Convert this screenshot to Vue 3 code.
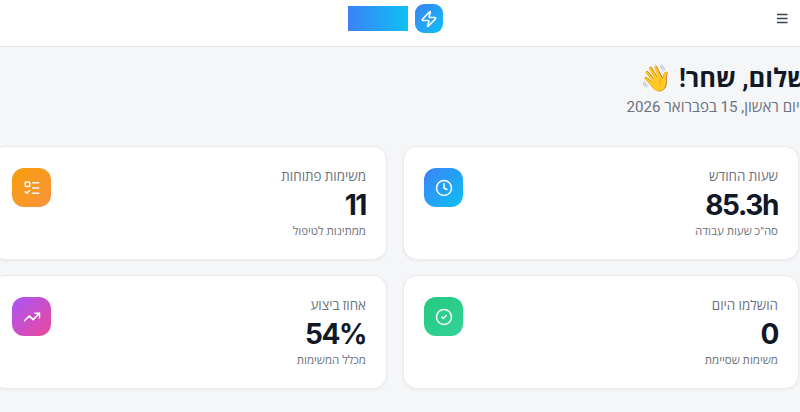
<script setup>
const cards = [
  { title: 'שעות החודש', value: '85.3h', sub: 'סה"כ שעות עבודה', tone: 'blue', icon: 'clock' },
  { title: 'משימות פתוחות', value: '11', sub: 'ממתינות לטיפול', tone: 'orange', icon: 'list' },
  { title: 'הושלמו היום', value: '0', sub: 'משימות שסיימת', tone: 'green', icon: 'check' },
  { title: 'אחוז ביצוע', value: '54%', sub: 'מכלל המשימות', tone: 'purple', icon: 'trend' },
]
</script>

<template>
  <div class="page" dir="rtl">
    <header class="topbar">
      <button class="menu" aria-label="תפריט">
        <svg width="14" height="14" viewBox="0 0 14 14" fill="none" stroke="#374151" stroke-width="1.6">
          <path d="M2 2.500h10.500M2 6.500h10.500M2 10.500h10.500" />
        </svg>
      </button>
      <div class="brand">
        <span class="logo">
          <svg width="18" height="18" viewBox="0 0 24 24" fill="none" stroke="#fff" stroke-width="2" stroke-linecap="round" stroke-linejoin="round">
            <path d="M4 14a1 1 0 0 1-.78-1.630l9.900-10.200a.5.5 0 0 1 .86.460l-1.920 6.020A1 1 0 0 0 13 10h7a1 1 0 0 1 .78 1.630l-9.900 10.200a.5.5 0 0 1-.86-.460l1.920-6.020A1 1 0 0 0 11 14z" />
          </svg>
        </span>
        <span class="wordmark"></span>
      </div>
    </header>

    <main class="content">
      <div class="greeting">
        <h1>שלום, שחר! <span class="wave">👋</span></h1>
        <p>היום ראשון, 15 בפברואר 2026</p>
      </div>

      <section class="grid">
        <article v-for="c in cards" :key="c.title" class="card">
          <div class="text">
            <div class="label">{{ c.title }}</div>
            <div class="value">{{ c.value }}</div>
            <div class="sub">{{ c.sub }}</div>
          </div>
          <div class="tile" :class="c.tone">
            <svg v-if="c.icon === 'clock'" width="18" height="18" viewBox="0 0 24 24" fill="none" stroke="#fff" stroke-width="2" stroke-linecap="round" stroke-linejoin="round">
              <circle cx="12" cy="12" r="10" /><path d="M12 6v6l4 2" />
            </svg>
            <svg v-else-if="c.icon === 'list'" width="18" height="18" viewBox="0 0 24 24" fill="none" stroke="#fff" stroke-width="2" stroke-linecap="round" stroke-linejoin="round">
              <rect x="3" y="4" width="6" height="6" rx="1" /><path d="m3 17 2 2 4-4M13 5h8M13 12h8M13 19h8" />
            </svg>
            <svg v-else-if="c.icon === 'check'" width="18" height="18" viewBox="0 0 24 24" fill="none" stroke="#fff" stroke-width="2" stroke-linecap="round" stroke-linejoin="round">
              <circle cx="12" cy="12" r="10" /><path d="m9 12 2 2 4-4" />
            </svg>
            <svg v-else width="18" height="18" viewBox="0 0 24 24" fill="none" stroke="#fff" stroke-width="2" stroke-linecap="round" stroke-linejoin="round">
              <path d="M22 7 13.500 15.500l-5-5L2 17" /><path d="M16 7h6v6" />
            </svg>
          </div>
        </article>
      </section>
    </main>
  </div>
</template>

<style scoped>
.page {
  width: 800px;
  height: 412px;
  overflow: hidden;
  background: #f5f6f8;
  font-family: Roboto, Inter, "Noto Sans", "Open Sans", sans-serif;
  color: #111827;
}
.topbar {
  height: 46px;
  box-sizing: content-box;
  background: #fff;
  border-bottom: 1px solid #e5e7eb;
  display: flex;
  align-items: center;
  justify-content: center;
  position: relative;
}
.menu {
  position: absolute;
  right: 11px;
  top: 12px;
  width: 14px;
  height: 14px;
  padding: 0;
  border: 0;
  background: none;
  display: flex;
}
.brand {
  display: flex;
  align-items: center;
  gap: 7px;
  margin-top: -9px;
  margin-right: 10px;
}
.logo {
  width: 28px;
  height: 29px;
  border-radius: 9px;
  background: linear-gradient(135deg, #3b82f6, #0ec0f4);
  display: flex;
  align-items: center;
  justify-content: center;
}
.wordmark {
  width: 60px;
  height: 25px;
  background: linear-gradient(90deg, #3b82f6, #0ec0f4);
}
.greeting {
  margin-right: -9px;
  padding-top: 13px;
}
h1 {
  margin: 0 2px 0 0;
  font-size: 25.500px;
  line-height: 36px;
  font-weight: 700;
  white-space: nowrap;
}
.wave { font-family: "Noto Color Emoji", sans-serif; }
p {
  margin: 0;
  font-size: 15.100px;
  line-height: 22px;
  color: #6b7280;
  white-space: nowrap;
}
.grid {
  display: grid;
  grid-template-columns: 396px 396px;
  gap: 15px 16px;
  margin-top: 28px;
  margin-right: 1px;
}
.card {
  height: 114px;
  box-sizing: border-box;
  background: #fff;
  border: 1px solid #e8eaee;
  border-radius: 14px;
  box-shadow: 0 1px 3px rgba(0, 0, 0, 0.05);
  padding: 20px;
  display: flex;
  justify-content: space-between;
  align-items: flex-start;
}
.label {
  font-size: 13.400px;
  line-height: 20px;
  color: #6b7280;
}
.value {
  font-family: Inter, Roboto, sans-serif;
  font-size: 28px;
  line-height: 34px;
  font-weight: 700;
  letter-spacing: -0.05em;
  margin-top: 1px;
}
.sub {
  font-size: 11.500px;
  line-height: 18px;
  color: #6b7280;
}
.tile {
  width: 39px;
  height: 39px;
  margin-top: 1px;
  border-radius: 12px;
  display: flex;
  align-items: center;
  justify-content: center;
}
.blue { background: linear-gradient(135deg, #3b82f6, #0ec0f4); }
.orange { background: linear-gradient(135deg, #f59e0b, #fb923c); }
.green { background: linear-gradient(135deg, #22c97f, #34d399); }
.purple { background: linear-gradient(135deg, #a855f7, #ec4899); }
</style>

<style>
html, body { margin: 0; }
</style>
